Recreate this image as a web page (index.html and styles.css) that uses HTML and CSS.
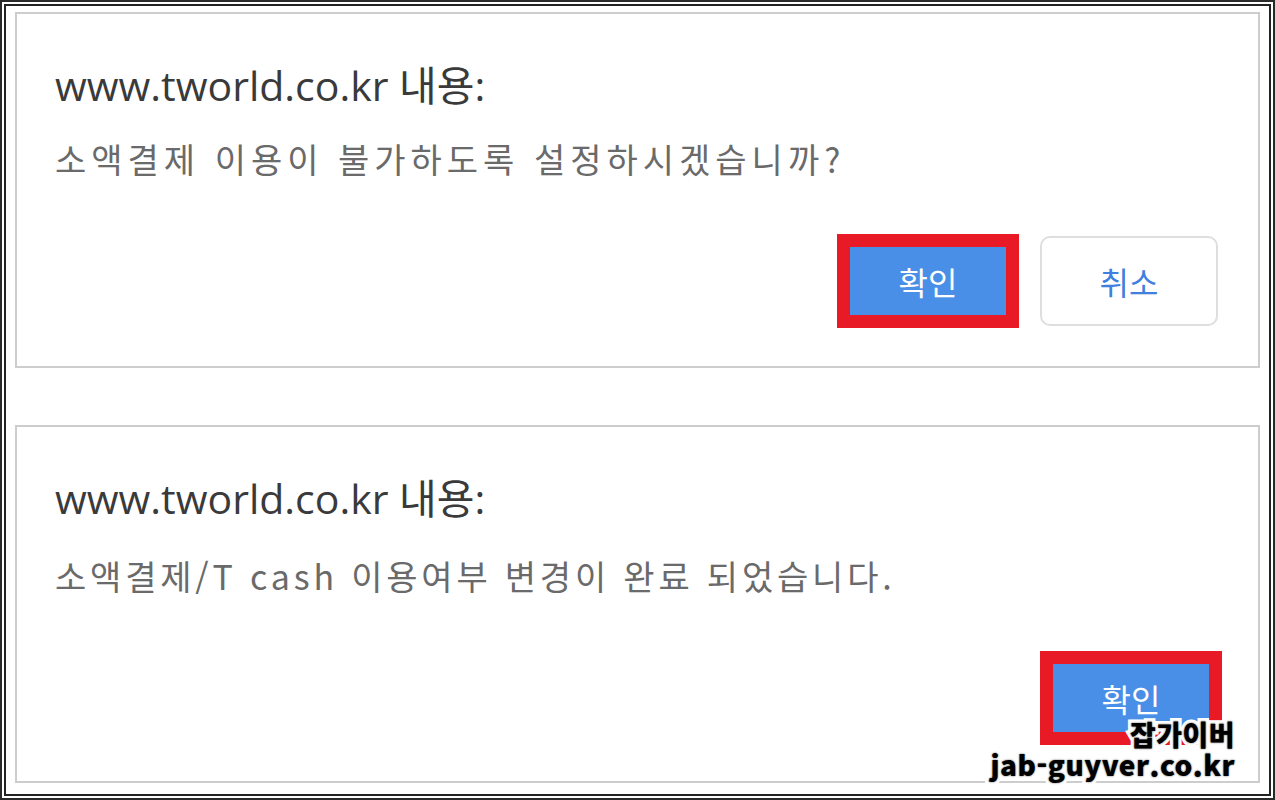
FILE: index.html
```html
<!DOCTYPE html>
<html lang="ko">
<head>
	<meta charset="UTF-8">
	<title>소액결제 차단</title>
	<link rel="stylesheet" href="styles.css">
</head>
<body>
	<div class="frame">
		<div class="frame-in">
			<div class="dialog d-first">
				<h1>www.tworld.co.kr 내용:</h1>
				<p>소액결제 이용이 불가하도록 설정하시겠습니까?</p>
				<div class="btns">
					<span class="mark"><button class="ok">확인</button></span>
					<button class="cancel">취소</button>
				</div>
			</div>
			<div class="dialog d-second">
				<h1>www.tworld.co.kr 내용:</h1>
				<p>소액결제/T cash 이용여부 변경이 완료 되었습니다.</p>
				<div class="btns">
					<span class="mark"><button class="ok">확인</button></span>
				</div>
			</div>
			<div class="stamp">
				<b>잡가이버</b>
				<b>jab-guyver.co.kr</b>
			</div>
		</div>
	</div>
</body>
</html>
```

FILE: styles.css
```css
*{
	box-sizing: border-box;
}
body{
	margin:0;
	background:#fff;
	font-family: "Open Sans", "Noto Sans CJK KR", sans-serif;
}
.frame{
	width:1275px;
	height:800px;
	border:2px solid #2a2a2a;
	padding:2px;
}
.frame-in{
	position:relative;
	height:100%;
	border:2px solid #222;
	padding:6px 9px 11px 9px;
	display:flex;
	flex-direction:column;
	gap:57px;
}
.dialog{
	border:2px solid #cdcdcd;
	padding:0 40px 0 38px;
	display:flex;
	flex-direction:column;
}
.d-first{
	height:356px;
}
.d-second{
	height:358px;
}
h1{
	margin:45px 0 0 0;
	font-weight:normal;
	font-size:41px;
	line-height:52px;
	color:#3a3a3a;
}
p{
	margin:26px 0 0 0;
	font-family: "Noto Sans CJK KR", sans-serif;
	font-size:34px;
	line-height:44px;
	letter-spacing:5px;
	color:#6a6a6a;
}
.d-second p{
	margin-top:30px;
	letter-spacing:3.8px;
}
.btns{
	display:flex;
	justify-content:flex-end;
	align-items:center;
	gap:21px;
	margin-top:auto;
	margin-bottom:38px;
}
.d-second .btns{
	margin-bottom:36px;
	margin-right:-4px;
}
.mark{
	display:block;
	border:13px solid #e81a25;
}
button{
	font-family: "Noto Sans CJK KR", sans-serif;
	font-size:32px;
	cursor:pointer;
}
.ok{
	display:block;
	width:156px;
	height:68px;
	border:0;
	background:#4a8fe7;
	color:#fff;
}
.cancel{
	width:178px;
	height:90px;
	border:2px solid #dedede;
	border-radius:10px;
	background:#fff;
	color:#3f80de;
}
.stamp{
	position:absolute;
	right:34px;
	bottom:15px;
	display:flex;
	flex-direction:column;
	align-items:flex-end;
	line-height:30px;
}
.stamp b{
	font-family: "Noto Sans CJK KR", sans-serif;
	font-weight:900;
	font-size:28px;
	letter-spacing:0.5px;
	color:#000;
	-webkit-text-stroke:7px #fff;
	paint-order:stroke fill;
	text-shadow:0 0 2px #555;
}
```
